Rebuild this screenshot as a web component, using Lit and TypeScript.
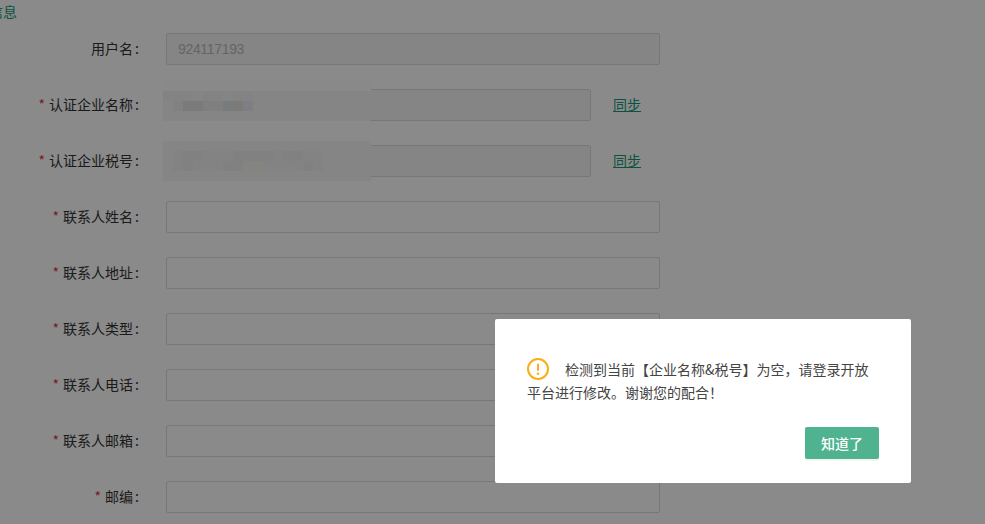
import { LitElement, html, css } from "lit";
import { customElement } from "lit/decorators.js";

interface Row { label: string; required: boolean; value?: string; disabled?: boolean; sync?: boolean; }

const ROWS: Row[] = [
  { label: "用户名", required: false, value: "924117193", disabled: true },
  { label: "认证企业名称", required: true, disabled: true, sync: true },
  { label: "认证企业税号", required: true, disabled: true, sync: true },
  { label: "联系人姓名", required: true },
  { label: "联系人地址", required: true },
  { label: "联系人类型", required: true },
  { label: "联系人电话", required: true },
  { label: "联系人邮箱", required: true },
  { label: "邮编", required: true },
];

const T = "#898989", B = "#858585", S = "#838383", M = "#818181", K = "#7f7f7f", D = "#7a7a78", E = "#787b7b", F = "#7e7f85", H = "#848481";
const row = (head: string[]) => [...head, ...Array(21 - head.length).fill(B)];
const cellsA: string[][] = [
  Array(21).fill(T),
  row([S, S, S, B, S, S, B, S, S]),
  row([B, M, D, D, K, K, E, D, F]),
  Array(21).fill(B),
];
const cellsB: string[][] = [
  Array(21).fill(B),
  row([B, S, M, M, S, S, S, M, M, M, M, S, M, M, S, S]),
  row([B, S, M, S, S, S, M, M, H, H, S, S, S, S, M, S]),
  Array(21).fill(B),
];

@customElement("app-root")
export class AppRoot extends LitElement {
  static styles = css`
    :host {
      display: block;
      position: relative;
      width: 985px;
      height: 524px;
      overflow: hidden;
      background: #fff;
      font-family: "Noto Sans CJK SC", "Liberation Sans", sans-serif;
      font-size: 14px;
      color: #333;
    }
    .content { position: relative; z-index: 0; }
    .title {
      height: 24px;
      margin-left: -39px;
      line-height: 22px;
      color: #159a77;
    }
    .form {
      display: flex;
      flex-direction: column;
      gap: 24px;
      padding-top: 9px;
    }
    .row {
      display: grid;
      grid-template-columns: 143px auto;
      align-items: center;
      height: 32px;
    }
    .label {
      display: flex;
      justify-content: flex-end;
      align-items: center;
      white-space: nowrap;
      line-height: 30px;
      height: 30px;
      margin-bottom: 2px;
    }
    .star {
      color: #e3323f;
      margin-right: 4px;
    }
    .colon {
      margin-left: 2px;
      width: 8px;
    }
    .field {
      display: flex;
      align-items: center;
      margin-left: 23px;
    }
    .input {
      box-sizing: border-box;
      flex: none;
      width: 494px;
      height: 32px;
      border: 1px solid #dcdcdc;
      border-radius: 2px;
      padding-left: 11px;
      line-height: 30px;
      background: #fff;
      color: #bbb;
      font-family: "Liberation Sans", sans-serif;
      font-size: 14px;
      letter-spacing: -0.33px;
    }
    .input.disabled { background: #f5f5f5; }
    .input.short { width: 425px; }
    .sync {
      margin: 0 0 2px 22px;
      line-height: 30px;
      color: #159a77;
      text-decoration: underline;
      white-space: nowrap;
    }
    .mosaic {
      position: absolute;
      left: 163px;
      width: 208px;
      height: 40px;
      display: grid;
      grid-template-columns: repeat(21, 10px);
      grid-template-rows: repeat(4, 10px);
      overflow: hidden;
      z-index: 1;
    }
    .mosaic.a { top: 81px; }
    .mosaic.b { top: 141px; }
    .overlay {
      position: absolute;
      inset: 0;
      background: rgba(0, 0, 0, 0.46);
      z-index: 0;
    }
    .modal {
      position: absolute;
      left: 495px;
      top: 319px;
      width: 416px;
      height: 164px;
      box-sizing: border-box;
      padding: 39px 32px 24px;
      background: #fff;
      border-radius: 2px;
      display: flex;
      flex-direction: column;
      justify-content: space-between;
      z-index: 2;
    }
    .msg {
      margin: 0;
      line-height: 23px;
      color: #444;
      white-space: nowrap;
    }
    .icon {
      display: inline-block;
      width: 22px;
      height: 22px;
      margin-right: 16px;
      vertical-align: -5px;
    }
    .actions { display: flex; justify-content: flex-end; }
    .btn {
      width: 74px;
      height: 32px;
      border: 0;
      padding: 0;
      border-radius: 2px;
      background: #4fb38f;
      color: #fff;
      font: inherit;
      font-weight: 500;
      box-shadow: 0 2px 0 rgba(0, 0, 0, 0.045);
    }
  `;

  private mosaic(cells: string[][], cls: string) {
    return html`<div class="mosaic ${cls}">
      ${cells.flat().map((c) => html`<span style="background:${c}"></span>`)}
    </div>`;
  }

  render() {
    return html`
      <div class="content">
        <div class="title">基本信息</div>
        <div class="form">
          ${ROWS.map((r) => html`
            <div class="row">
              <div class="label">
                ${r.required ? html`<span class="star">*</span>` : ""}
                <span>${r.label}</span><span class="colon">:</span>
              </div>
              <div class="field">
                <div class="input ${r.disabled ? "disabled" : ""} ${r.sync ? "short" : ""}">${r.value ?? ""}</div>
                ${r.sync ? html`<a class="sync">同步</a>` : ""}
              </div>
            </div>
          `)}
        </div>
      </div>
      <div class="overlay"></div>
      ${this.mosaic(cellsA, "a")}
      ${this.mosaic(cellsB, "b")}
      <div class="modal">
        <p class="msg">
          <svg class="icon" viewBox="0 0 22 22" fill="none">
            <circle cx="11" cy="11" r="10" stroke="#faad14" stroke-width="2"></circle>
            <rect x="10" y="5.5" width="2" height="7.5" rx="1" fill="#faad14"></rect>
            <circle cx="11" cy="15.8" r="1.2" fill="#faad14"></circle>
          </svg>检测到当前【企业名称&税号】为空，请登录开放<br />平台进行修改。谢谢您的配合！
        </p>
        <div class="actions"><button class="btn">知道了</button></div>
      </div>
    `;
  }
}
